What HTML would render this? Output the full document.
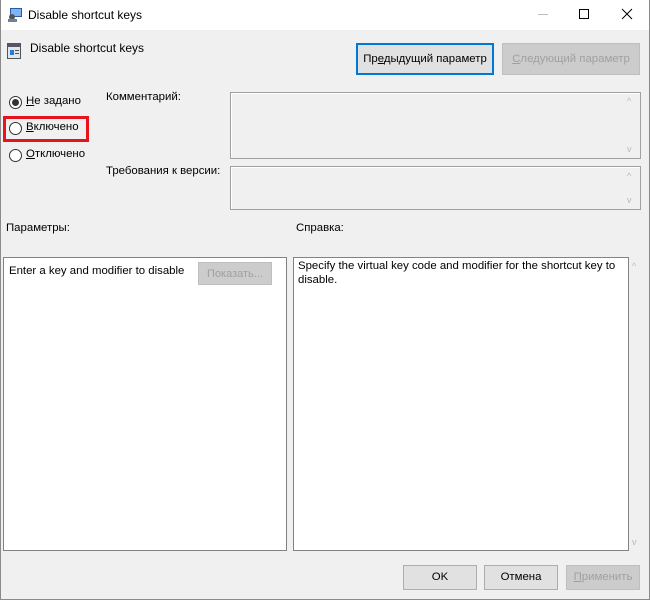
<!DOCTYPE html>
<html><head><meta charset="utf-8"><style>
*{margin:0;padding:0;box-sizing:border-box}
body{width:650px;height:600px;overflow:hidden;background:#f0f0f0;font-family:"Liberation Sans",sans-serif;font-size:11.4px;color:#000;position:relative}
.a{position:absolute;white-space:nowrap}
.win{position:absolute;left:0;top:0;width:650px;height:600px;border:1px solid #8a8a8a;border-top:none}
.title{position:absolute;left:0;top:0;width:650px;height:30px;background:#fff}
.btn{position:absolute;border:1px solid #adadad;background:#e1e1e1;text-align:center;line-height:23px}
.dis{background:#cccccc;border-color:#bfbfbf;color:#a0a0a0}
.box{position:absolute;border:1px solid #a0a0a0;box-shadow:inset 1px 1px 0 #fff}
.radio{position:absolute;width:13px;height:13px;border:1px solid #333;border-radius:50%;background:#fff}
.arr{position:absolute;color:#b8b8b8;font-size:9px}
</style></head><body>
<div class="title"></div>
<div class="win"></div>
<svg class="a" style="left:7px;top:7px" width="16" height="16"><rect x="3" y="1" width="12" height="9" fill="#2a5bb0"/><rect x="4" y="2" width="10" height="7" fill="#7fb5ee"/><circle cx="5" cy="10" r="3" fill="#555"/><rect x="1" y="12" width="9" height="3" fill="#6f7f9f"/></svg>
<div class="a" style="left:28px;top:8px;font-size:12px">Disable shortcut keys</div>
<div class="a" style="left:538px;top:14px;width:10px;border-top:1px solid #bbb"></div>
<div class="a" style="left:579px;top:9px;width:10px;height:10px;border:1px solid #000"></div>
<svg class="a" style="left:621px;top:8px" width="12" height="12"><path d="M1 1L11 11M11 1L1 11" stroke="#000" stroke-width="1"/></svg>
<svg class="a" style="left:7px;top:43px" width="14" height="16"><rect x="0.5" y="0.5" width="13" height="15" fill="#dfe6ee" stroke="#555"/><rect x="1" y="1" width="12" height="3" fill="#556"/><rect x="3" y="7" width="4" height="5" fill="#2b7bd3"/><rect x="8" y="7" width="4" height="1" fill="#555"/><rect x="8" y="10" width="4" height="1" fill="#555"/></svg>
<div class="a" style="left:30px;top:41px;font-size:12px">Disable shortcut keys</div>
<div class="btn" style="left:356px;top:43px;width:138px;height:32px;border:2px solid #0078d7;line-height:28px">Пр<u>е</u>дыдущий параметр</div>
<div class="btn dis" style="left:502px;top:43px;width:138px;height:32px;line-height:30px"><u>С</u>ледующий параметр</div>
<div class="radio" style="left:9px;top:96px"></div><div class="a" style="left:12px;top:99px;width:7px;height:7px;border-radius:50%;background:#333"></div>
<div class="a" style="left:26px;top:95px"><u>Н</u>е задано</div>
<div class="radio" style="left:9px;top:122px"></div>
<div class="a" style="left:26px;top:121px"><u>В</u>ключено</div>
<div class="a" style="left:3px;top:116px;width:86px;height:26px;border:3px solid #e8141c"></div>
<div class="radio" style="left:9px;top:149px"></div>
<div class="a" style="left:26px;top:148px"><u>О</u>тключено</div>
<div class="a" style="left:106px;top:91px">Комментарий:</div>
<div class="box" style="left:230px;top:92px;width:411px;height:67px"></div>
<div class="arr" style="left:627px;top:96px">^</div><div class="arr" style="left:627px;top:144px">v</div>
<div class="a" style="left:106px;top:165px">Требования к версии:</div>
<div class="box" style="left:230px;top:166px;width:411px;height:44px"></div>
<div class="arr" style="left:627px;top:171px">^</div><div class="arr" style="left:627px;top:195px">v</div>
<div class="a" style="left:6px;top:222px">Параметры:</div>
<div class="a" style="left:296px;top:222px">Справка:</div>
<div class="box" style="left:3px;top:257px;width:284px;height:294px;background:#fff;border-color:#828282"></div>
<div class="a" style="left:9px;top:265px">Enter a key and modifier to disable</div>
<div class="btn dis" style="left:198px;top:262px;width:74px;height:23px;font-size:11px">Показать...</div>
<div class="box" style="left:293px;top:257px;width:336px;height:294px;background:#fff;border-color:#828282"></div>
<div class="a" style="left:298px;top:259px;line-height:14px">Specify the virtual key code and modifier for the shortcut key to<br>disable.</div>
<div class="arr" style="left:632px;top:261px">^</div><div class="arr" style="left:632px;top:537px">v</div>
<div class="btn" style="left:403px;top:565px;width:74px;height:25px">OK</div>
<div class="btn" style="left:484px;top:565px;width:74px;height:25px">Отмена</div>
<div class="btn dis" style="left:566px;top:565px;width:74px;height:25px"><u>П</u>рименить</div>
</body></html>
